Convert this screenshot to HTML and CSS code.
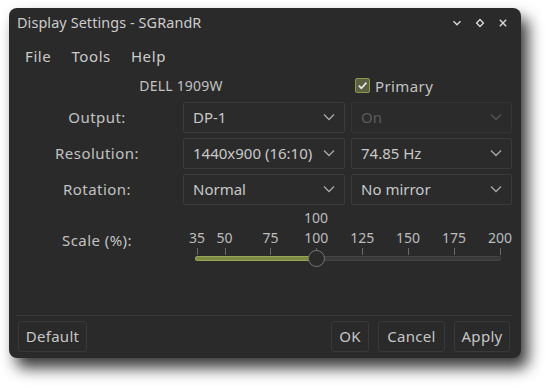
FILE: index.html
```html
<!DOCTYPE html>
<html>
<head>
<meta charset="utf-8">
<title>Display Settings - SGRandR</title>
<link rel="stylesheet" href="styles.css">
</head>
<body>
<div class="window">
  <div class="titlebar">
    <span class="title">Display Settings - SGRandR</span>
    <div class="wctl">
      <svg width="10" height="10" viewBox="0 0 10 10"><path d="M1.5 3.2 L5 6.7 L8.5 3.2" fill="none" stroke="#d8d8d8" stroke-width="1.4"/></svg>
      <svg width="10" height="10" viewBox="0 0 10 10"><path d="M5 1.6 L8.4 5 L5 8.4 L1.6 5 Z" fill="none" stroke="#d8d8d8" stroke-width="1.4"/></svg>
      <svg width="10" height="10" viewBox="0 0 10 10"><path d="M1.8 1.8 L8.2 8.2 M8.2 1.8 L1.8 8.2" fill="none" stroke="#d8d8d8" stroke-width="1.4"/></svg>
    </div>
  </div>
  <div class="menubar">
    <span class="menu">File</span>
    <span class="menu">Tools</span>
    <span class="menu">Help</span>
  </div>
  <div class="form">
    <div class="monitor">DELL 1909W</div>
    <div class="check">
      <span class="box"><svg width="11" height="11" viewBox="0 0 11 11"><path d="M1.8 5.6 L4.4 8.2 L9.4 2.6" fill="none" stroke="#e6e6e6" stroke-width="1.7"/></svg></span>
      <span>Primary</span>
    </div>

    <div class="label">Output:</div>
    <div class="combo"><span>DP-1</span><svg class="arrow" width="12" height="8" viewBox="0 0 12 8"><path d="M1 1.5 L6 6.5 L11 1.5" fill="none" stroke="#a8a8a8" stroke-width="1.3"/></svg></div>
    <div class="combo disabled"><span>On</span><svg class="arrow" width="12" height="8" viewBox="0 0 12 8"><path d="M1 1.5 L6 6.5 L11 1.5" fill="none" stroke="#555" stroke-width="1.3"/></svg></div>

    <div class="label">Resolution:</div>
    <div class="combo"><span>1440x900 (16:10)</span><svg class="arrow" width="12" height="8" viewBox="0 0 12 8"><path d="M1 1.5 L6 6.5 L11 1.5" fill="none" stroke="#a8a8a8" stroke-width="1.3"/></svg></div>
    <div class="combo"><span>74.85 Hz</span><svg class="arrow" width="12" height="8" viewBox="0 0 12 8"><path d="M1 1.5 L6 6.5 L11 1.5" fill="none" stroke="#a8a8a8" stroke-width="1.3"/></svg></div>

    <div class="label">Rotation:</div>
    <div class="combo"><span>Normal</span><svg class="arrow" width="12" height="8" viewBox="0 0 12 8"><path d="M1 1.5 L6 6.5 L11 1.5" fill="none" stroke="#a8a8a8" stroke-width="1.3"/></svg></div>
    <div class="combo"><span>No mirror</span><svg class="arrow" width="12" height="8" viewBox="0 0 12 8"><path d="M1 1.5 L6 6.5 L11 1.5" fill="none" stroke="#a8a8a8" stroke-width="1.3"/></svg></div>

    <div class="label scale-label">Scale (%):</div>
    <div class="slider">
      <span class="value" style="left:133px">100</span>
      <span class="tlabel" style="left:14px">35</span>
      <span class="tlabel" style="left:41.5px">50</span>
      <span class="tlabel" style="left:87.4px">75</span>
      <span class="tlabel" style="left:133.3px">100</span>
      <span class="tlabel" style="left:179.2px">125</span>
      <span class="tlabel" style="left:225.1px">150</span>
      <span class="tlabel" style="left:271px">175</span>
      <span class="tlabel" style="left:316.9px">200</span>
      <span class="tick" style="left:14px"></span>
      <span class="tick" style="left:41.5px"></span>
      <span class="tick" style="left:87.4px"></span>
      <span class="tick" style="left:133.3px"></span>
      <span class="tick" style="left:179.2px"></span>
      <span class="tick" style="left:225.1px"></span>
      <span class="tick" style="left:271px"></span>
      <span class="tick" style="left:316.9px"></span>
      <div class="track"><div class="fill" style="width:121px"></div></div>
      <span class="handle" style="left:133px"></span>
    </div>
  </div>
  <div class="sep"></div>
  <div class="footer">
    <button class="btn btn-default">Default</button>
    <div class="spacer"></div>
    <button class="btn btn-ok">OK</button>
    <button class="btn btn-cancel">Cancel</button>
    <button class="btn btn-apply">Apply</button>
  </div>
</div>
</body>
</html>
```

FILE: styles.css
```css
* { box-sizing: border-box; }
html, body {
  margin: 0;
  padding: 0;
  background: #ffffff;
  width: 548px;
  height: 388px;
  overflow: hidden;
}
body {
  font-family: "Noto Sans", "DejaVu Sans", sans-serif;
  font-size: 14px;
  color: #c2c2c2;
}
.window {
  margin: 8px 0 0 9px;
  width: 512px;
  height: 350px;
  background: #2a2a2a;
  border-radius: 8px;
  box-shadow: 7px 10px 15px rgba(0,0,0,0.78);
  display: flex;
  flex-direction: column;
}
.titlebar {
  height: 32px;
  display: flex;
  align-items: center;
  padding: 0 13px 0 8px;
}
.title {
  flex: 1;
  font-size: 14.4px;
  color: #cccccc;
  letter-spacing: 0.1px;
  padding-bottom: 3px;
}
.wctl {
  display: flex;
  gap: 13px;
  align-items: center;
  padding-bottom: 2px;
}
.wctl svg { display: block; }
.menubar {
  height: 32px;
  display: flex;
  align-items: center;
  gap: 20px;
  padding-left: 16px;
  font-size: 15px;
  letter-spacing: 0.6px;
  color: #cccccc;
  padding-bottom: 1px;
}
.form {
  display: grid;
  grid-template-columns: 160px 162px 161px;
  grid-template-rows: 25px 31px 31px 31px 60px;
  column-gap: 6px;
  row-gap: 5px;
  padding-left: 8px;
}
.monitor {
  grid-column: 1 / 3;
  text-align: center;
  padding-top: 4px;
  line-height: 20px;
  letter-spacing: 0.2px;
}
.check {
  display: flex;
  align-items: center;
  padding-left: 4px;
  padding-top: 2px;
  gap: 5px;
  font-size: 15px;
  letter-spacing: 0.4px;
}
.box {
  width: 15px;
  height: 15px;
  border: 1.5px solid #8b9a49;
  border-radius: 2px;
  background: #5b6043;
  display: flex;
  align-items: center;
  justify-content: center;
}
.box svg { display: block; }
.label {
  display: flex;
  align-items: center;
  justify-content: center;
  font-size: 15px;
  letter-spacing: 0.45px;
  padding-bottom: 2px;
}
.combo {
  border: 1px solid #3b3b3b;
  border-radius: 2px;
  background: #2b2b2b;
  display: flex;
  align-items: center;
  padding: 0 9px 1px 9px;
  font-size: 15px;
  color: #c8c8c8;
}
.combo span { flex: 1; padding-bottom: 1px; }
.combo .arrow { display: block; }
.combo.disabled { color: #5c5c5c; border-color: #343434; }
.scale-label {
  align-items: flex-start;
  padding-top: 20px;
}
.slider {
  grid-column: 2 / 4;
  position: relative;
}
.slider .value, .slider .tlabel {
  position: absolute;
  transform: translateX(-50%);
  font-size: 14px;
  color: #bdbdbd;
  line-height: 16px;
}
.slider .value { top: 0px; }
.slider .tlabel { top: 20px; }
.slider .tick {
  position: absolute;
  top: 38px;
  width: 1px;
  height: 7px;
  background: #6a6a6a;
}
.track {
  position: absolute;
  left: 12px;
  top: 46px;
  width: 306px;
  height: 5px;
  border-radius: 3px;
  background: #3a3a3a;
  border: 1px solid #444;
}
.fill {
  height: 100%;
  border-radius: 3px;
  background: #7c8b44;
  box-shadow: 0 0 0 1px #97a656;
}
.handle {
  position: absolute;
  top: 40px;
  width: 17px;
  height: 17px;
  margin-left: -8.5px;
  border-radius: 50%;
  background: #2a2a2a;
  border: 1px solid #767676;
}
.sep {
  margin: 45px 9px 0 7px;
  height: 1px;
  background: #383838;
}
.footer {
  display: flex;
  align-items: center;
  gap: 9px;
  padding: 5px 11px 0 9px;
}
.spacer { flex: 1; }
.btn {
  height: 31px;
  background: #2a2a2a;
  border: 1px solid #393939;
  border-radius: 3px;
  color: #c6c6c6;
  font-family: "Noto Sans", "DejaVu Sans", sans-serif;
  font-size: 15px;
  letter-spacing: 0.3px;
  padding: 0 0 2px 0;
}
.btn-default { width: 69px; }
.btn-ok { width: 38px; }
.btn-cancel { width: 67px; }
.btn-apply { width: 56px; }
```
